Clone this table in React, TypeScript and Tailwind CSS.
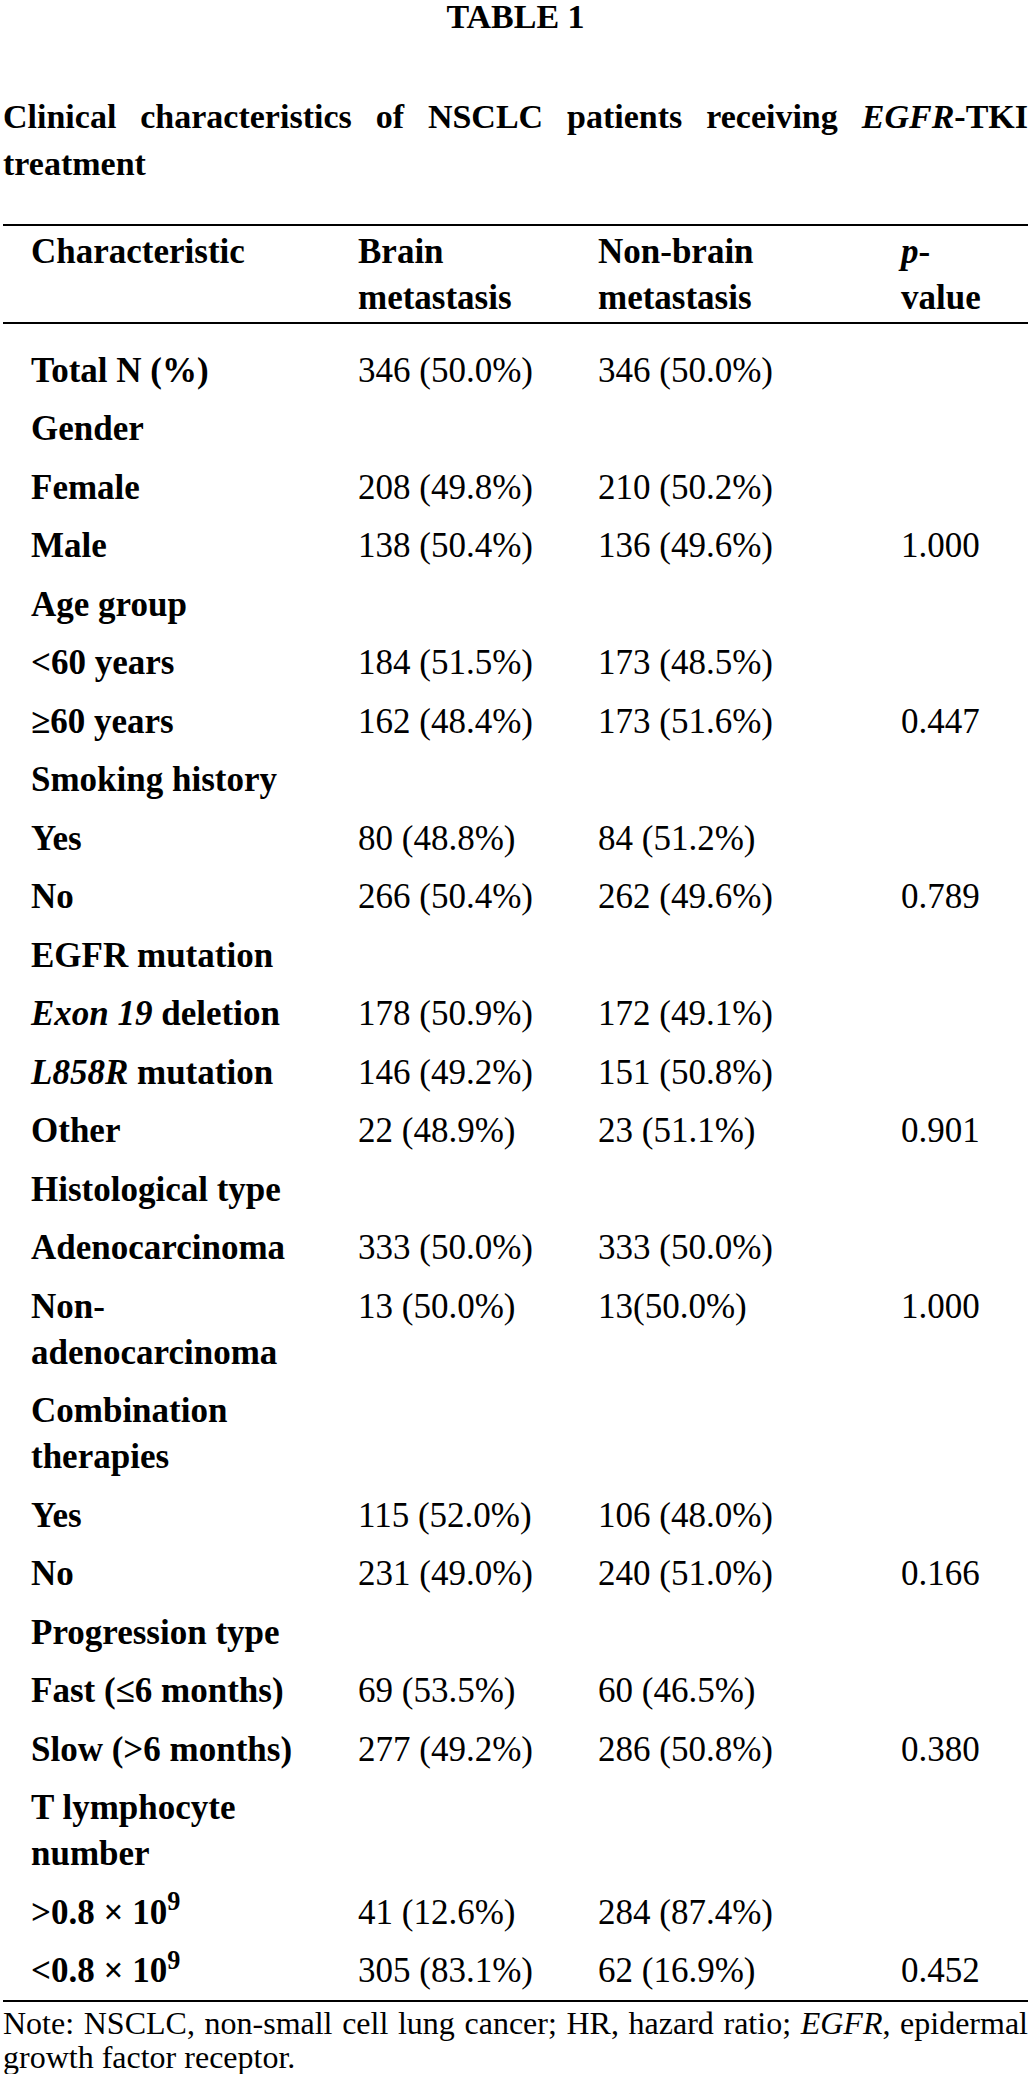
import type { ReactNode } from "react";

type Row = {
  label: ReactNode;
  a?: string;
  b?: string;
  p?: string;
};

const rows: Row[] = [
  { label: "Total N (%)", a: "346 (50.0%)", b: "346 (50.0%)" },
  { label: "Gender" },
  { label: "Female", a: "208 (49.8%)", b: "210 (50.2%)" },
  { label: "Male", a: "138 (50.4%)", b: "136 (49.6%)", p: "1.000" },
  { label: "Age group" },
  { label: "<60 years", a: "184 (51.5%)", b: "173 (48.5%)" },
  { label: "≥60 years", a: "162 (48.4%)", b: "173 (51.6%)", p: "0.447" },
  { label: "Smoking history" },
  { label: "Yes", a: "80 (48.8%)", b: "84 (51.2%)" },
  { label: "No", a: "266 (50.4%)", b: "262 (49.6%)", p: "0.789" },
  { label: "EGFR mutation" },
  { label: <><i>Exon 19</i> deletion</>, a: "178 (50.9%)", b: "172 (49.1%)" },
  { label: <><i>L858R</i> mutation</>, a: "146 (49.2%)", b: "151 (50.8%)" },
  { label: "Other", a: "22 (48.9%)", b: "23 (51.1%)", p: "0.901" },
  { label: "Histological type" },
  { label: "Adenocarcinoma", a: "333 (50.0%)", b: "333 (50.0%)" },
  { label: <>Non-<br />adenocarcinoma</>, a: "13 (50.0%)", b: "13(50.0%)", p: "1.000" },
  { label: <>Combination<br />therapies</> },
  { label: "Yes", a: "115 (52.0%)", b: "106 (48.0%)" },
  { label: "No", a: "231 (49.0%)", b: "240 (51.0%)", p: "0.166" },
  { label: "Progression type" },
  { label: "Fast (≤6 months)", a: "69 (53.5%)", b: "60 (46.5%)" },
  { label: "Slow (>6 months)", a: "277 (49.2%)", b: "286 (50.8%)", p: "0.380" },
  { label: <>T lymphocyte<br />number</> },
  { label: <>&gt;0.8 × 10<sup>9</sup></>, a: "41 (12.6%)", b: "284 (87.4%)" },
  { label: <>&lt;0.8 × 10<sup>9</sup></>, a: "305 (83.1%)", b: "62 (16.9%)", p: "0.452" },
];

export default function App() {
  return (
    <div className="w-[1028px] bg-white pl-[3px] font-['Liberation_Serif','Times_New_Roman',serif] text-black">
      <h1 className="text-center text-[34px] font-bold leading-[34px]">TABLE 1</h1>

      <div className="mt-[59px] w-[1025px] text-[34px] font-bold leading-[47px]">
        <div className="whitespace-nowrap text-justify [text-align-last:justify]">
          Clinical characteristics of NSCLC patients receiving <i>EGFR</i>-TKI
        </div>
        <div>treatment</div>
      </div>

      <table className="mt-[37px] w-[1025px] table-fixed border-separate border-spacing-0 border-y-2 border-black text-[35px] leading-[46px]">
        <colgroup>
          <col className="w-[327px]" />
          <col className="w-[240px]" />
          <col className="w-[303px]" />
          <col className="w-[155px]" />
        </colgroup>
        <thead>
          <tr>
            <th className="border-b-2 border-black pb-[1.5px] pl-[28px] pt-[2.5px] text-left align-top font-bold">
              Characteristic
            </th>
            <th className="border-b-2 border-black pb-[1.5px] pl-[28px] pt-[2.5px] text-left align-top font-bold">
              Brain
              <br />
              metastasis
            </th>
            <th className="border-b-2 border-black pb-[1.5px] pl-[28px] pt-[2.5px] text-left align-top font-bold">
              Non-brain
              <br />
              metastasis
            </th>
            <th className="border-b-2 border-black pb-[1.5px] pl-[28px] pt-[2.5px] text-left align-top font-bold">
              <i>p</i>-
              <br />
              value
            </th>
          </tr>
        </thead>
        <tbody>
          {rows.map((row, i) => {
            const pad = i === 0 ? "pt-[23.5px] pb-[6px]" : "pt-[6.5px] pb-[6px]";
            return (
              <tr key={i}>
                <td className={`${pad} whitespace-nowrap pl-[28px] align-top font-bold`}>{row.label}</td>
                <td className={`${pad} whitespace-nowrap pl-[28px] align-top`}>{row.a}</td>
                <td className={`${pad} whitespace-nowrap pl-[28px] align-top`}>{row.b}</td>
                <td className={`${pad} whitespace-nowrap pl-[28px] align-top`}>{row.p}</td>
              </tr>
            );
          })}
        </tbody>
      </table>

      <div className="mt-[4px] w-[1025px] text-[32px] leading-[34px]">
        <div className="whitespace-nowrap text-justify [text-align-last:justify]">
          Note: NSCLC, non-small cell lung cancer; HR, hazard ratio; <i>EGFR</i>, epidermal
        </div>
        <div>growth factor receptor.</div>
      </div>
    </div>
  );
}
